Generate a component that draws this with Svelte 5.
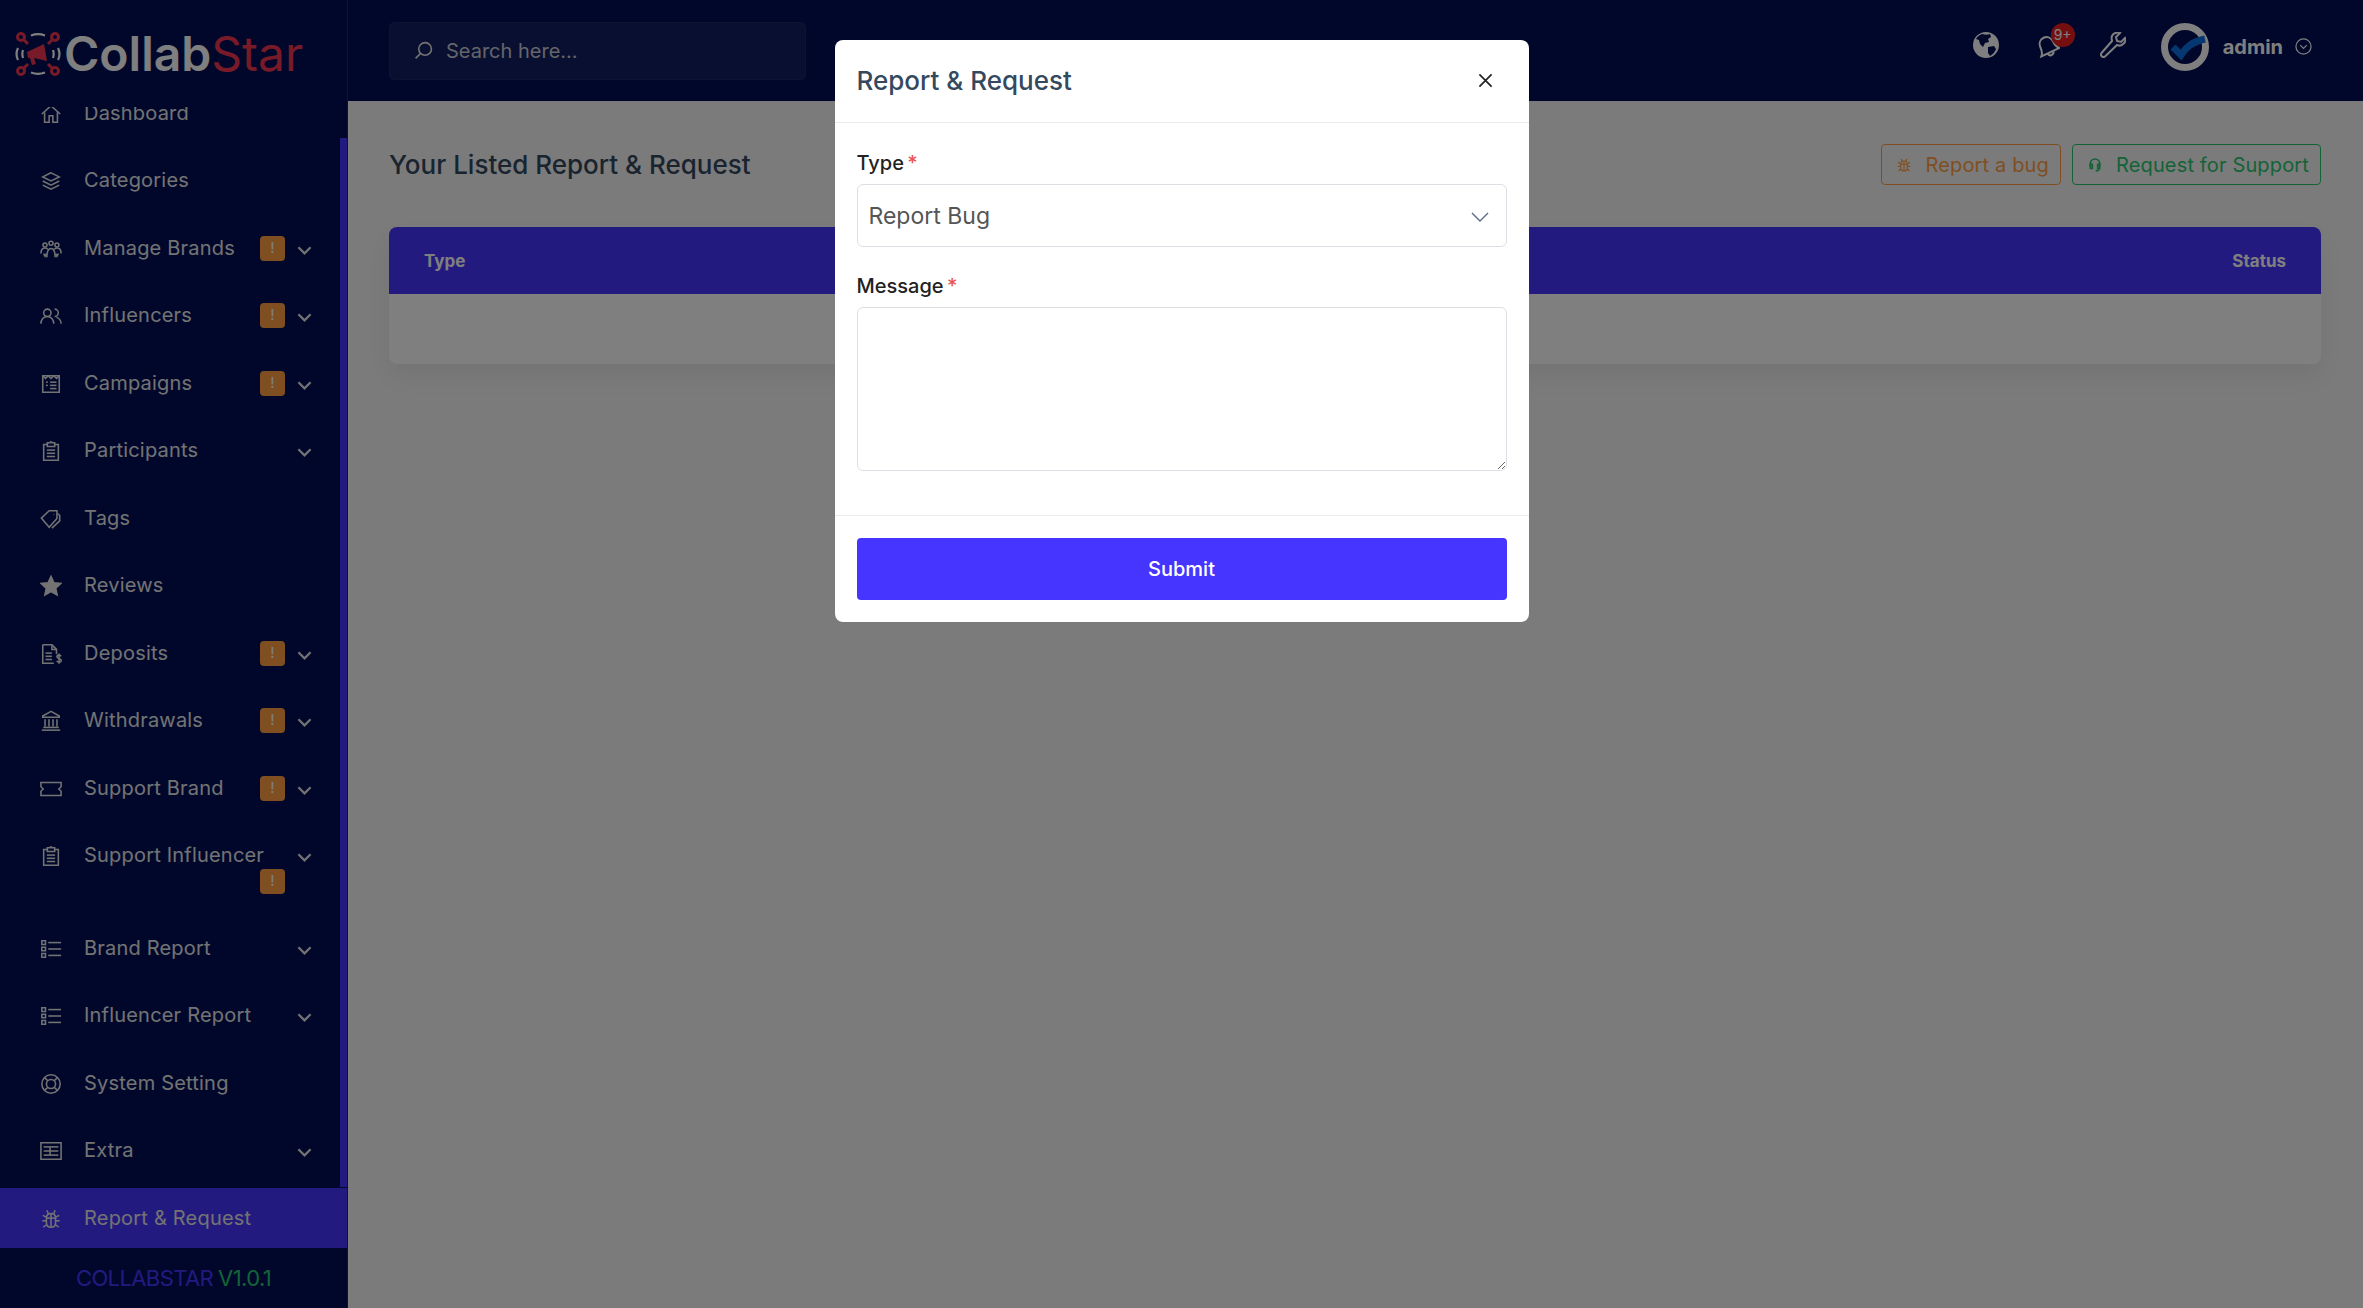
<script>
  const icons = {
    home: ['M2 12 12 3l10 9', 'M5 10v11h5v-7h4v7h5V10'],
    layers: ['M12 3 3 7.5 12 12l9-4.500z', 'M3 12l9 4.500 9-4.500', 'M3 16.500 12 21l9-4.500'],
    group: ['M12 3.500a2.200 2.200 0 1 1 0 4.400 2.200 2.200 0 0 1 0-4.400z', 'M5.500 5.500a2.200 2.200 0 1 1 0 4.400 2.200 2.200 0 0 1 0-4.400z', 'M18.500 5.500a2.200 2.200 0 1 1 0 4.400 2.200 2.200 0 0 1 0-4.400z', 'M1 17c0-4 2-6 4.500-6 1.500 0 2.500.5 3 1.500', 'M23 17c0-4-2-6-4.500-6-1.500 0-2.500.5-3 1.500', 'M7.500 21c0-6 2-9.500 4.500-9.500s4.500 3.500 4.500 9.500', 'M4 17l1.500 3 1.500-3', 'M17 17l1.500 3 1.500-3'],
    users: ['M8 4.500a4 4 0 1 1 0 8 4 4 0 0 1 0-8z', 'M1 20.500c0-4.500 3-8 7-8s7 3.500 7 8', 'M16 4.500a4 4 0 1 1 0 8', 'M18 13.500c3 1 5 3.500 5 7'],
    news: ['M3 3h18v18H3z', 'M3 3l3 3 3-3 3 3 3-3 3 3 3-3', 'M11 10h7', 'M11 13.500h7', 'M11 17h7', 'M6.500 10h2', 'M6.500 13.500h2'],
    clip: ['M8 5H4v17h16V5h-4', 'M8 3h3a1 1 0 0 1 2 0h3v4H8z', 'M7.500 11h9', 'M7.500 14.500h9', 'M7.500 18h9'],
    tag: ['M1.500 11 10 3h8.500v8.500L10 21z', 'M19 6l2.500 2v6L13 22', 'M15 6.500v.5'],
    star: ['M12 1.500l3.200 7 7.600.8-5.700 5.100 1.600 7.500L12 18.100l-6.700 3.800 1.600-7.500L1.200 9.300l7.600-.8z'],
    file: ['M3 2h10l5 5v5', 'M3 2v20h12', 'M13 2v5h5', 'M6 11h7', 'M6 14.500h7', 'M6 18h7', 'M23 14.500c-.5-1-1.500-1.300-2.200-1.300-1.300 0-2.300.7-2.300 1.800 0 2.500 4.700 1.300 4.700 3.900 0 1.200-1 1.900-2.400 1.900-1 0-2-.5-2.500-1.400', 'M20.800 11.500v11'],
    bank: ['M12 1.500 3 6.500V8h18V6.500z', 'M5.500 10v8', 'M9.800 10v8', 'M14.200 10v8', 'M18.500 10v8', 'M3.500 19h17', 'M2 22h20'],
    ticket: ['M1 5h22v4.500l-2.500 2.500 2.500 2.500V19H1v-4.500L3.500 12 1 9.500z'],
    list: ['M2 3h4v4H2z', 'M2 10h4v4H2z', 'M2 17h4v4H2z', 'M9 5h14', 'M9 12h14', 'M9 19h14'],
    ring: ['M12 2a10 10 0 1 1 0 20 10 10 0 0 1 0-20z', 'M12 7a5 5 0 1 1 0 10 5 5 0 0 1 0-10z', 'M5 5l3.500 3.500', 'M19 5l-3.500 3.500', 'M5 19l3.500-3.500', 'M19 19l-3.500-3.500'],
    server: ['M1 3h22v18H1z', 'M4 7.500h16', 'M4 12h16', 'M4 16.500h16', 'M11 7.500v9'],
    bug: ['M7 11c0-3 2-5 5-5s5 2 5 5v5c0 3-2 5-5 5s-5-2-5-5z', 'M12 6v15', 'M7 11h10', 'M9 6 7.500 2.500', 'M15 6l1.500-3.500', 'M7 10 3 8', 'M17 10l4-2', 'M7 14H2.500', 'M17 14h4.500', 'M7.500 18 3.500 21', 'M16.500 18l4 3']
  };

  const menu = [
    { label: 'Dashboard', icon: 'home' },
    { label: 'Categories', icon: 'layers' },
    { label: 'Manage Brands', icon: 'group', alert: true, sub: true },
    { label: 'Influencers', icon: 'users', alert: true, sub: true },
    { label: 'Campaigns', icon: 'news', alert: true, sub: true },
    { label: 'Participants', icon: 'clip', sub: true },
    { label: 'Tags', icon: 'tag' },
    { label: 'Reviews', icon: 'star' },
    { label: 'Deposits', icon: 'file', alert: true, sub: true },
    { label: 'Withdrawals', icon: 'bank', alert: true, sub: true },
    { label: 'Support Brand', icon: 'ticket', alert: true, sub: true },
    { label: 'Support Influencer', icon: 'clip', alert: true, sub: true },
    { label: 'Brand Report', icon: 'list', sub: true },
    { label: 'Influencer Report', icon: 'list', sub: true },
    { label: 'System Setting', icon: 'ring' },
    { label: 'Extra', icon: 'server', sub: true },
    { label: 'Report & Request', icon: 'bug', active: true }
  ];
</script>

{#snippet icon(name, cls)}
  <svg class={cls} class:solid={name === 'star'} viewBox="0 0 24 24" fill="none" stroke="currentColor" stroke-width="1.700">
    {#each icons[name] as d}
      <path {d} />
    {/each}
  </svg>
{/snippet}

<div class="app">
  <aside class="sidebar">
    <div class="brand">
      <svg class="brand-mark" viewBox="0 0 46 46" fill="none" stroke-width="3">
        <g stroke="#f0344e">
          <circle cx="6" cy="6" r="3.500" />
          <circle cx="40" cy="6" r="3.500" />
          <circle cx="6" cy="40" r="3.500" />
          <circle cx="40" cy="40" r="3.500" />
          <path d="M9 9l4 4M37 9l-4 4M9 37l4-4M37 37l-4-4" />
        </g>
        <g stroke="#fff" stroke-width="2.200">
          <path d="M16 4.500c4-1.500 10-1.500 14 0M16 41.500c4 1.500 10 1.500 14 0" />
          <path d="M3 17c-2 4-2 8 0 12M43 17c2 4 2 8 0 12M8 19c-1 3-1 5 0 8M38 19c1 3 1 5 0 8" />
        </g>
        <path d="M12 21l17-8 3 17-13-3 2 6-4 1-2-7-2 0z" fill="#f0344e" />
      </svg>
      <span class="brand-name">Collab<span class="brand-star">Star</span></span>
    </div>

    <nav class="menu">
      <ul class="menu-list">
        {#each menu as item}
          <li class="menu-item" class:active={item.active}>
            {@render icon(item.icon, 'menu-icon')}
            <div class="menu-label">
              <span>{item.label}</span>
              {#if item.alert}
                <span class="alert-badge">!</span>
              {/if}
            </div>
            {#if item.sub}
              <svg class="menu-arrow" viewBox="0 0 16 16" fill="none" stroke="currentColor" stroke-width="2.400">
                <path d="M1.500 4.500 8 11l6.500-6.500" />
              </svg>
            {/if}
          </li>
        {/each}
      </ul>
    </nav>
    <span class="sidebar-scroll"></span>

    <div class="version"><span class="version-name">COLLABSTAR</span> <span class="version-num">V1.0.1</span></div>
  </aside>

  <div class="content">
    <header class="topbar">
      <label class="search">
        <svg viewBox="0 0 24 24" fill="none" stroke="currentColor" stroke-width="2">
          <circle cx="14" cy="10" r="8" />
          <path d="M8 16l-6 6" />
        </svg>
        <input type="text" placeholder="Search here..." />
      </label>

      <div class="top-actions">
        <svg class="top-icon globe" viewBox="0 0 26 26">
          <circle cx="13" cy="13" r="13" fill="#fff" />
          <path d="M9 2c3 1 6 1 8 0l1 3-3 2 1 3-4 1-2 4-3-3-1-4-3-1c1-2 3-4 6-5zM15 15l6-1 2 3c-1 3-3 5-6 7l-2-3z" fill="#000e56" />
        </svg>
        <div class="bell">
          <svg class="top-icon" viewBox="0 0 26 26" fill="none" stroke="#fff" stroke-width="2">
            <g transform="rotate(-25 13 13)">
              <path d="M3 21c2-2 3-4 3-8 0-5 3-8 7-8s7 3 7 8c0 4 1 6 3 8z" />
              <path d="M10 21a3 3 0 0 0 6 0" />
            </g>
          </svg>
          <span class="bell-count">9+</span>
        </div>
        <svg class="top-icon" viewBox="0 0 26 26" fill="none" stroke="#fff" stroke-width="2">
          <path d="M25 6l-4 4-4-1-1-4 4-4c-3-1-7 0-8 3-1 2 0 4 0 5L1.500 21a2.500 2.500 0 0 0 3.500 3.500L17 13c2 1 4 1 6-1 2-1 3-4 2-6z" />
        </svg>
        <div class="user">
          <svg class="avatar" viewBox="0 0 48 48" fill="none">
            <circle cx="24" cy="24" r="20.500" stroke="#fff" stroke-width="7" />
            <path d="M12 24l8 8c5-8 11-13 24-16" stroke="#0a6fe0" stroke-width="7" />
          </svg>
          <span class="user-name">admin</span>
          <svg class="user-arrow" viewBox="0 0 18 18" fill="none" stroke="#fff" stroke-width="1.300">
            <circle cx="9" cy="9" r="8" />
            <path d="M5.500 7.500 9 11l3.500-3.500" />
          </svg>
        </div>
      </div>
    </header>

    <main class="page">
      <div class="page-head">
        <h1>Your Listed Report &amp; Request</h1>
        <div class="page-buttons">
          <button class="outline bug-btn">
            {@render icon('bug', 'btn-icon')}
            Report a bug
          </button>
          <button class="outline support-btn">
            <svg class="btn-icon" viewBox="0 0 24 24" fill="none" stroke="currentColor" stroke-width="2.500">
              <path d="M5 15V10a7 7 0 0 1 14 0v5" />
              <path d="M5 11h3v6H5zM16 11h3v6h-3z" />
              <path d="M18 17c0 3-2 4-5 4" />
            </svg>
            Request for Support
          </button>
        </div>
      </div>

      <div class="table-card">
        <table>
          <thead>
            <tr>
              <th>Type</th>
              <th class="right">Status</th>
            </tr>
          </thead>
          <tbody>
            <tr>
              <td colspan="2"></td>
            </tr>
          </tbody>
        </table>
      </div>
    </main>
  </div>

  <div class="backdrop">
    <div class="modal">
      <div class="modal-head">
        <h2>Report &amp; Request</h2>
        <svg class="modal-close" viewBox="0 0 16 16" fill="none" stroke="#222" stroke-width="1.800">
          <path d="M1.500 1.500l13 13M14.500 1.500l-13 13" />
        </svg>
      </div>
      <div class="modal-body">
        <div class="field">
          <span class="field-label">Type <em>*</em></span>
          <div class="select-wrap">
            <select>
              <option>Report Bug</option>
              <option>Request for Support</option>
            </select>
            <svg viewBox="0 0 18 10" fill="none" stroke="#5b6e88" stroke-width="1.400">
              <path d="M1 1l8 8 8-8" />
            </svg>
          </div>
        </div>
        <div class="field">
          <span class="field-label">Message <em>*</em></span>
          <textarea></textarea>
        </div>
      </div>
      <div class="modal-foot">
        <button class="submit">Submit</button>
      </div>
    </div>
  </div>
</div>

<style>
  :global(body) {
    margin: 0;
    font-family: Inter, "Open Sans", sans-serif;
    background: #f6f6f8;
  }

  .app {
    display: flex;
    height: 1308px;
    overflow: hidden;
  }

  .sidebar {
    position: relative;
    flex: none;
    width: 347px;
    display: flex;
    flex-direction: column;
    background: #000f56;
    border-right: 1px solid #1a2668;
    color: #e6e6e6;
  }

  .brand {
    flex: none;
    height: 107px;
    display: flex;
    align-items: center;
    gap: 3px;
    padding-left: 15px;
    box-sizing: border-box;
  }

  .brand-mark {
    width: 46px;
    height: 46px;
  }

  .brand-name {
    font-size: 48px;
    font-weight: 600;
    color: #fff;
  }

  .brand-star {
    color: #f0344e;
    font-weight: 400;
  }

  .menu {
    flex: 1;
    min-height: 0;
    overflow: hidden;
  }

  .menu-list {
    list-style: none;
    margin: -24.500px 0 0;
    padding: 0;
  }

  .menu-item {
    display: flex;
    align-items: flex-start;
    padding: 17px 35px 17px 40px;
    margin-bottom: 6.500px;
    line-height: 27px;
    font-size: 20px;
    letter-spacing: 0.200px;
  }

  .menu-item.active {
    background: #4634ff;
  }

  .menu-icon {
    flex: none;
    width: 22px;
    height: 22px;
    margin: 3px 22px 0 0;
  }

  .menu-icon.solid {
    fill: currentColor;
  }

  .menu-label {
    flex: none;
    width: 201px;
    display: flex;
    flex-wrap: wrap;
    align-items: center;
    justify-content: space-between;
    white-space: nowrap;
  }

  .alert-badge {
    width: 25px;
    height: 25px;
    margin-left: auto;
    border-radius: 4px;
    background: #ff9f43;
    color: #fff;
    font-size: 15px;
    line-height: 24px;
    text-align: center;
  }

  .menu-arrow {
    flex: none;
    width: 15px;
    height: 15px;
    margin: 8px 0 0 12px;
  }

  .sidebar-scroll {
    position: absolute;
    top: 138px;
    right: 0;
    bottom: 121px;
    width: 7px;
    background: #4634ff;
  }

  .version {
    flex: none;
    height: 60px;
    display: flex;
    align-items: center;
    justify-content: center;
    gap: 5px;
    font-size: 22px;
    letter-spacing: -0.600px;
  }

  .version-name {
    color: #4634ff;
  }

  .version-num {
    color: #28c76f;
  }

  .content {
    flex: 1;
    min-width: 0;
  }

  .topbar {
    height: 101px;
    display: flex;
    align-items: center;
    justify-content: space-between;
    padding: 0 41px;
    background: #000f56;
    box-sizing: border-box;
  }

  .search {
    width: 417px;
    height: 58px;
    display: flex;
    align-items: center;
    gap: 13px;
    padding-left: 24px;
    box-sizing: border-box;
    border: 1px solid rgba(255, 255, 255, 0.04);
    border-radius: 6px;
    background: rgba(255, 255, 255, 0.07);
    color: #e6e6e6;
  }

  .search svg {
    width: 19px;
    height: 19px;
  }

  .search input {
    flex: 1;
    min-width: 0;
    padding: 0;
    border: 0;
    outline: 0;
    background: transparent;
    font: 20px Inter, sans-serif;
    color: #fff;
  }

  .search input::placeholder {
    color: #c8cad4;
    opacity: 1;
  }

  .top-actions {
    display: flex;
    align-items: center;
    margin: 0 10px 8px 0;
  }

  .top-icon {
    display: block;
    width: 26px;
    height: 26px;
    margin-top: -3px;
  }

  .globe {
    margin-right: 35px;
  }

  .bell {
    position: relative;
    margin-right: 40px;
  }

  .bell-count {
    position: absolute;
    top: -12px;
    right: -15px;
    width: 24px;
    height: 24px;
    border-radius: 50%;
    background: #ea1f1f;
    color: #fff;
    font-size: 14px;
    line-height: 24px;
    text-align: center;
  }

  .user {
    display: flex;
    align-items: center;
    margin-left: 35px;
  }

  .avatar {
    width: 48px;
    height: 48px;
  }

  .user-name {
    margin: 0 12px 0 14px;
    font-size: 20px;
    font-weight: 700;
    color: #fff;
  }

  .user-arrow {
    width: 17px;
    height: 17px;
  }

  .page {
    padding: 43px 42px 0 41px;
  }

  .page-head {
    display: flex;
    align-items: center;
    justify-content: space-between;
    margin-bottom: 42px;
  }

  h1 {
    margin: 0;
    font-size: 26px;
    font-weight: 500;
    color: #34495e;
  }

  .page-buttons {
    display: flex;
    gap: 11px;
  }

  .outline {
    height: 41px;
    display: flex;
    align-items: center;
    gap: 13px;
    padding: 0 11px 0 14px;
    border: 1px solid currentColor;
    border-radius: 4px;
    background: transparent;
    font: 20px Inter, sans-serif;
    letter-spacing: 0.150px;
  }

  .bug-btn {
    color: #ff9f43;
  }

  .support-btn {
    color: #28c76f;
  }

  .btn-icon {
    width: 16px;
    height: 16px;
  }

  .table-card {
    border-radius: 8px;
    background: #fff;
    overflow: hidden;
    box-shadow: 0 12px 24px rgba(0, 0, 0, 0.06);
  }

  table {
    width: 100%;
    border-collapse: collapse;
  }

  th {
    height: 67px;
    padding: 0 35px;
    background: #4634ff;
    color: #fff;
    font-size: 17px;
    font-weight: 700;
    text-align: left;
  }

  th.right {
    text-align: right;
  }

  td {
    height: 70px;
    padding: 0;
  }

  .backdrop {
    position: fixed;
    inset: 0;
    display: flex;
    justify-content: center;
    align-items: flex-start;
    padding-top: 40px;
    box-sizing: border-box;
    background: rgba(0, 0, 0, 0.5);
  }

  .modal {
    width: 694px;
    border-radius: 8px;
    background: #fff;
  }

  .modal-head {
    height: 83px;
    display: flex;
    align-items: center;
    justify-content: space-between;
    padding: 0 36px 2px 22px;
    box-sizing: border-box;
    border-bottom: 1px solid #ebebeb;
  }

  h2 {
    margin: 0;
    font-size: 26px;
    font-weight: 500;
    color: #34495e;
  }

  .modal-close {
    width: 15px;
    height: 15px;
  }

  .modal-body {
    display: flex;
    flex-direction: column;
    gap: 26px;
    padding: 27px 22px 44px;
    border-bottom: 1px solid #ebebeb;
  }

  .field {
    display: flex;
    flex-direction: column;
    gap: 7px;
  }

  .field-label {
    font-size: 20px;
    line-height: 27px;
    font-weight: 500;
    color: #222;
  }

  .field-label em {
    color: #ea5455;
    font-style: normal;
    margin-left: -2px;
  }

  .select-wrap {
    position: relative;
  }

  .select-wrap svg {
    position: absolute;
    top: 28px;
    right: 18px;
    width: 18px;
    height: 10px;
  }

  select {
    display: block;
    width: 100%;
    height: 63px;
    padding: 0 11px;
    box-sizing: border-box;
    appearance: none;
    border: 1px solid #dcdfe3;
    border-radius: 6px;
    background: #fff;
    font: 23px Inter, sans-serif;
    color: #555;
    outline: 0;
  }

  textarea {
    display: block;
    width: 100%;
    height: 164px;
    padding: 11px;
    box-sizing: border-box;
    resize: vertical;
    border: 1px solid #dcdfe3;
    border-radius: 6px;
    outline: 0;
  }

  .modal-foot {
    padding: 22px;
  }

  .submit {
    display: block;
    width: 100%;
    height: 62px;
    border: 0;
    border-radius: 4px;
    background: #4634ff;
    color: #fff;
    font: 500 20px Inter, sans-serif;
  }
</style>
